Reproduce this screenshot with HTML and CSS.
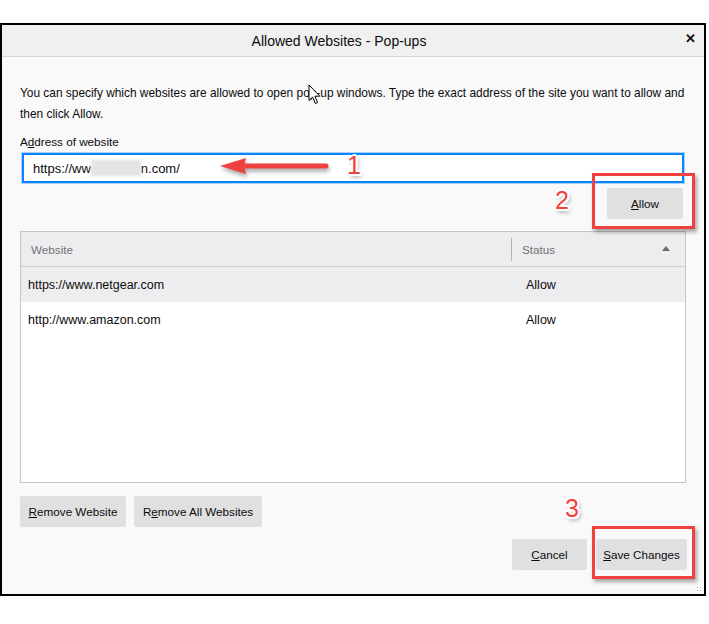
FILE: index.html
```html
<!DOCTYPE html>
<html lang="en">
<head>
    <meta charset="UTF-8">
    <title>Allowed Websites - Pop-ups</title>
    <link rel="stylesheet" href="styles.css">
</head>
<body>
    <div class="dialog">
        <div class="titlebar">
            <span class="title">Allowed Websites - Pop-ups</span>
            <span class="close">&#x2715;</span>
        </div>

        <div class="content">
            <p class="desc">You can specify which websites are allowed to open pop-up windows. Type the exact address of the site you want to allow and<br>then click Allow.</p>

            <label class="label" for="url">A<u>d</u>dress of website</label>
            <div class="input" id="url">https://ww<span class="blur"></span>n.com/</div>

            <div class="allow-row">
                <button class="btn allow-btn"><u>A</u>llow</button>
            </div>

            <div class="list">
                <div class="list-head">
                    <div class="col-site">Website</div>
                    <div class="col-status">Status <span class="sort"></span></div>
                </div>
                <div class="list-row selected">
                    <div class="col-site">https://www.netgear.com</div>
                    <div class="col-status">Allow</div>
                </div>
                <div class="list-row">
                    <div class="col-site">http://www.amazon.com</div>
                    <div class="col-status">Allow</div>
                </div>
            </div>

            <div class="remove-row">
                <button class="btn remove-one"><u>R</u>emove Website</button>
                <button class="btn remove-all">R<u>e</u>move All Websites</button>
            </div>

            <div class="footer">
                <button class="btn cancel-btn"><u>C</u>ancel</button>
                <button class="btn save-btn"><u>S</u>ave Changes</button>
            </div>
        </div>
        <div class="grip"></div>
    </div>

    <!-- annotations drawn over the screenshot -->
    <svg class="cursor" width="14" height="21" viewBox="0 0 14 21">
        <path d="M1 1 L1 16.5 L4.6 13 L7.4 19.5 L9.6 18.5 L6.9 12.2 L11.8 12.2 Z" fill="#fff" stroke="#000" stroke-width="1" stroke-linejoin="round"/>
    </svg>

    <svg class="arrow" width="118" height="26" viewBox="0 0 118 26">
        <line x1="22" y1="10" x2="108" y2="10" stroke="#f04141" stroke-width="5" stroke-linecap="round"/>
        <polygon points="2,10 28,2 26,10 28,18" fill="#f04141"/>
    </svg>

    <span class="num num1">1</span>
    <span class="num num2">2</span>
    <span class="num num3">3</span>

    <div class="mark mark-allow"></div>
    <div class="mark mark-save"></div>
</body>
</html>
```

FILE: styles.css
```css
body {
    margin: 0;
    background-color: #fff;
    font-family: "Liberation Sans", Arial, sans-serif;
    font-size: 11.7px;
    color: #0c0c0d;
}

.dialog {
    position: relative;
    margin-top: 23px;
    width: 706px;
    height: 573px;
    box-sizing: border-box;
    border: 2px solid #000;
    background-color: #f9f9fa;
}

.titlebar {
    height: 31px;
    border-bottom: 1px solid #d7d7d7;
    background-color: #f0f0f0;
    display: flex;
    align-items: center;
    justify-content: center;
    position: relative;
}

.titlebar .title {
    font-size: 14px;
    margin-left: -28px;
}

.titlebar .close {
    position: absolute;
    right: 8px;
    top: 6px;
    font-size: 13px;
    font-weight: bold;
}

.content {
    padding: 26px 18px 0 18px;
}

.desc {
    margin: 0;
    font-size: 11.9px;
    line-height: 21px;
    white-space: nowrap;
}

.label {
    display: block;
    margin-top: 9px;
    line-height: 16px;
}

.input {
    margin-top: 3px;
    margin-left: 2px;
    width: 662px;
    height: 30px;
    box-sizing: border-box;
    border: 2px solid #0a84ff;
    box-shadow: 0 0 0 1px #a8d1ff;
    background-color: #fff;
    padding-left: 9px;
    display: flex;
    align-items: center;
    font-size: 13px;
}

.blur {
    display: inline-block;
    width: 50px;
    height: 16px;
    background-color: #e4e4e4;
    filter: blur(1px);
}

.btn {
    font-family: "Liberation Sans", Arial, sans-serif;
    font-size: 11.7px;
    color: #0c0c0d;
    background-color: #e0e0e1;
    border: none;
    border-radius: 2px;
    padding: 0;
    height: 31px;
}

.allow-row {
    display: flex;
    justify-content: flex-end;
    margin-top: 5px;
    margin-right: 3px;
}

.allow-btn {
    width: 76px;
}

.list {
    margin-top: 12px;
    height: 252px;
    box-sizing: border-box;
    border: 1px solid #c5c5c5;
    background-color: #fff;
}

.list-head,
.list-row {
    display: flex;
    align-items: center;
    height: 35px;
}

.list-row {
    font-size: 12.5px;
}

.list-head {
    height: 34px;
    background-color: #ededf0;
    border-bottom: 1px solid #d0d0d0;
    color: #737373;
}

.list-row.selected {
    background-color: #ededf0;
}

.col-site {
    width: 490px;
    box-sizing: border-box;
    padding-left: 7px;
}

.list-head .col-site {
    padding-left: 10px;
}

.col-status {
    flex: 1;
    padding-left: 15px;
}

.list-head .col-status {
    border-left: 1px solid #b4b4b4;
    padding-left: 10px;
    line-height: 23px;
    display: flex;
    justify-content: space-between;
    padding-right: 15px;
}

.sort {
    width: 0;
    height: 0;
    border-left: 4px solid transparent;
    border-right: 4px solid transparent;
    border-bottom: 5px solid #6a6a6a;
    align-self: center;
    margin-top: -2px;
}

.remove-row {
    display: flex;
    gap: 8px;
    margin-top: 13px;
}

.remove-one {
    width: 106px;
}

.remove-all {
    width: 128px;
}

.footer {
    display: flex;
    justify-content: flex-end;
    gap: 9px;
    margin-top: 12px;
    margin-right: -1px;
}

.cancel-btn {
    width: 75px;
}

.save-btn {
    width: 91px;
}

.grip {
    position: absolute;
    right: 2px;
    bottom: 2px;
    width: 6px;
    height: 6px;
    background:
        radial-gradient(circle, #b0b0b0 1px, transparent 1px) 0 0 / 3px 3px;
}

/* annotations */
.cursor {
    position: absolute;
    left: 308px;
    top: 84px;
}

.arrow {
    position: absolute;
    left: 218px;
    top: 156px;
    filter: drop-shadow(1px 3px 2px rgba(0, 0, 0, 0.35));
}

.num {
    position: absolute;
    font-family: "Liberation Sans", Arial, sans-serif;
    font-size: 25px;
    line-height: 25px;
    color: #f04141;
    text-shadow:
        -2px 0 #fff, 2px 0 #fff, 0 -2px #fff, 0 2px #fff,
        -1.5px -1.5px #fff, 1.5px 1.5px #fff, -1.5px 1.5px #fff, 1.5px -1.5px #fff,
        2px 3px 4px rgba(0, 0, 0, 0.45);
}

.num1 {
    left: 347px;
    top: 153px;
}

.num2 {
    left: 555px;
    top: 188px;
}

.num3 {
    left: 565px;
    top: 496px;
}

.mark {
    position: absolute;
    border: 3px solid #f04141;
    box-shadow: 2px 3px 4px rgba(0, 0, 0, 0.35);
    box-sizing: border-box;
}

.mark-allow {
    left: 592px;
    top: 173px;
    width: 103px;
    height: 56px;
}

.mark-save {
    left: 592px;
    top: 526px;
    width: 103px;
    height: 53px;
}
```
